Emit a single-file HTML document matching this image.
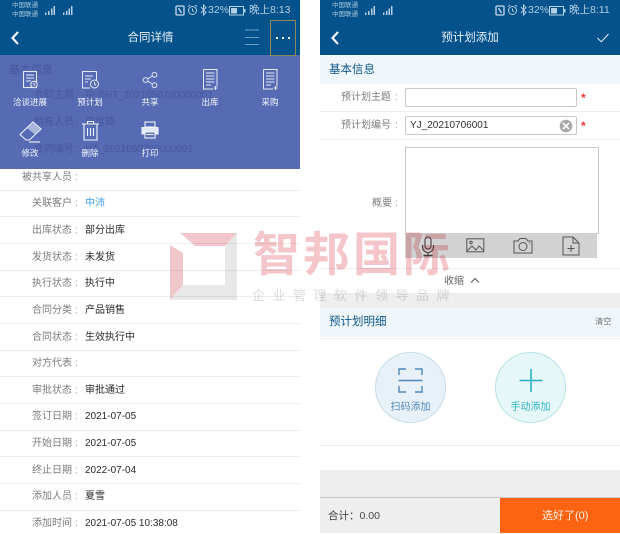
<!DOCTYPE html>
<html lang="zh">
<head>
<meta charset="utf-8">
<style>
html,body{margin:0;padding:0;background:#fff}
body{width:620px;height:533px;position:relative;overflow:hidden;font-family:"Liberation Sans","Noto Sans CJK SC",sans-serif;color:#333;filter:blur(.25px)}
.a{position:absolute;white-space:nowrap}
.hdr{position:absolute;top:0;height:55px;width:300px;background:#04528c}
.st{position:absolute;color:#b5cfe3;font-size:10.5px;line-height:12px}
.sm{position:absolute;color:#a9c6dc;font-size:6.5px;line-height:8px}
.ttl{position:absolute;top:30px;color:#e8f0f6;font-size:11.5px;line-height:16px;text-align:center}
.lb{position:absolute;left:0;width:72px;margin-top:1px;text-align:right;font-size:10px;line-height:14px;color:#7c7c7c;white-space:nowrap}
.co{position:absolute;left:75px;margin-top:1px;font-size:10px;line-height:14px;color:#999}
.v{position:absolute;left:85px;margin-top:1px;font-size:10px;line-height:14px;color:#2a2a2a;white-space:nowrap}
.ln{position:absolute;left:0;width:300px;height:1px;background:#eeeeee}
.rl{position:absolute;height:1px;left:320px;width:300px;background:#eeeeee}
.ml{position:absolute;color:#f4f6fc;font-size:8.5px;line-height:13px;text-align:center;white-space:nowrap;transform:translateX(-50%)}
.ghost{position:absolute;color:#47579d;font-size:10px;line-height:14px;white-space:nowrap}
.rlab{position:absolute;left:320px;width:71px;text-align:right;font-size:10px;line-height:14px;color:#7c7c7c;white-space:nowrap}
.star{position:absolute;left:581px;font-size:12px;line-height:12px;font-weight:bold;color:#f03838}
</style>
</head>
<body>

<!-- LEFT PANEL -->
<div class="a" style="left:0;top:169px;width:300px;height:364px;background:#fff"></div>
<div class="lb" style="top:170px">被共享人员</div><div class="co" style="top:170px">:</div>
<div class="ln" style="top:190px"></div>
<div class="lb" style="top:196px">关联客户</div><div class="co" style="top:196px">:</div><div class="v" style="top:196px;color:#3d9df2">中沛</div>
<div class="ln" style="top:216px"></div>
<div class="lb" style="top:223px">出库状态</div><div class="co" style="top:223px">:</div><div class="v" style="top:223px">部分出库</div>
<div class="ln" style="top:243px"></div>
<div class="lb" style="top:250px">发货状态</div><div class="co" style="top:250px">:</div><div class="v" style="top:250px">未发货</div>
<div class="ln" style="top:270px"></div>
<div class="lb" style="top:276px">执行状态</div><div class="co" style="top:276px">:</div><div class="v" style="top:276px">执行中</div>
<div class="ln" style="top:296px"></div>
<div class="lb" style="top:303px">合同分类</div><div class="co" style="top:303px">:</div><div class="v" style="top:303px">产品销售</div>
<div class="ln" style="top:323px"></div>
<div class="lb" style="top:330px">合同状态</div><div class="co" style="top:330px">:</div><div class="v" style="top:330px">生效执行中</div>
<div class="ln" style="top:350px"></div>
<div class="lb" style="top:356px">对方代表</div><div class="co" style="top:356px">:</div>
<div class="ln" style="top:376px"></div>
<div class="lb" style="top:383px">审批状态</div><div class="co" style="top:383px">:</div><div class="v" style="top:383px">审批通过</div>
<div class="ln" style="top:403px"></div>
<div class="lb" style="top:409px">签订日期</div><div class="co" style="top:409px">:</div><div class="v" style="top:409px">2021-07-05</div>
<div class="ln" style="top:430px"></div>
<div class="lb" style="top:436px">开始日期</div><div class="co" style="top:436px">:</div><div class="v" style="top:436px">2021-07-05</div>
<div class="ln" style="top:456px"></div>
<div class="lb" style="top:463px">终止日期</div><div class="co" style="top:463px">:</div><div class="v" style="top:463px">2022-07-04</div>
<div class="ln" style="top:483px"></div>
<div class="lb" style="top:489px">添加人员</div><div class="co" style="top:489px">:</div><div class="v" style="top:489px">夏雪</div>
<div class="ln" style="top:510px"></div>
<div class="lb" style="top:516px">添加时间</div><div class="co" style="top:516px">:</div><div class="v" style="top:516px">2021-07-05 10:38:08</div>

<!-- RIGHT PANEL BACKGROUNDS -->
<div class="a" style="left:320px;top:55px;width:300px;height:29px;background:#f0f7fb"></div>
<div class="a" style="left:329px;top:62px;font-size:11.5px;line-height:16px;color:#0f5688">基本信息</div>
<div class="rl" style="top:111px"></div>
<div class="rl" style="top:139px"></div>
<div class="rl" style="top:268px"></div>
<div class="a" style="left:320px;top:293px;width:300px;height:15px;background:#eeeeee"></div>
<div class="a" style="left:320px;top:308px;width:300px;height:29px;background:#f0f7fb"></div>
<div class="rl" style="top:338px"></div>
<div class="rl" style="top:445px"></div>
<div class="a" style="left:320px;top:470px;width:300px;height:63px;background:#eeeeee"></div>
<div class="a" style="left:320px;top:497px;width:300px;height:1px;background:#c9c9c9"></div>

<!-- RIGHT FORM -->
<div class="rlab" style="top:91px">预计划主题</div>
<div class="a" style="left:395px;top:91px;font-size:10px;line-height:14px;color:#999">:</div>
<div class="a" style="left:405px;top:88px;width:170px;height:17px;border:1px solid #c8c8c8;border-radius:2px;background:#fff"></div>
<div class="star" style="top:92px">*</div>

<div class="rlab" style="top:119px">预计划编号</div>
<div class="a" style="left:395px;top:119px;font-size:10px;line-height:14px;color:#999">:</div>
<div class="a" style="left:405px;top:116px;width:170px;height:17px;border:1px solid #c8c8c8;border-radius:2px;background:#fff"></div>
<div class="a" style="left:410px;top:119px;font-size:10px;line-height:14px;color:#333">YJ_20210706001</div>
<svg class="a" style="left:559px;top:119px" width="14" height="14" viewBox="0 0 14 14"><circle cx="7" cy="7" r="6.3" fill="#a8a8a8"/><path d="M4.4 4.4l5.2 5.2M9.6 4.4l-5.2 5.2" stroke="#fff" stroke-width="1.6" stroke-linecap="round"/></svg>
<div class="star" style="top:120px">*</div>

<div class="a" style="left:372px;top:197px;font-size:10px;line-height:14px;color:#7c7c7c">概要</div>
<div class="a" style="left:395px;top:197px;font-size:10px;line-height:14px;color:#999">:</div>
<div class="a" style="left:405px;top:147px;width:192px;height:85px;border:1px solid #c8c8c8;border-radius:1px;background:#fff"></div>
<div class="a" style="left:405px;top:233px;width:192px;height:25px;background:#d2d2d2"></div>

<div class="a" style="left:444px;top:275px;font-size:10px;line-height:14px;color:#666">收缩</div>
<svg class="a" style="left:469px;top:276px" width="12" height="9" viewBox="0 0 12 9"><path d="M2 6.500L6 2.500l4 4" fill="none" stroke="#555" stroke-width="1"/></svg>

<div class="a" style="left:329px;top:314px;font-size:11.500px;line-height:16px;color:#0f5688">预计划明细</div>
<div class="a" style="left:595px;top:316px;font-size:8.200px;line-height:12px;color:#777">清空</div>

<!-- circles -->
<div class="a" style="left:375px;top:352px;width:69px;height:69px;border:1px solid #c6dcea;border-radius:50%;background:#e9f1f8"></div>
<svg class="a" style="left:397px;top:367px" width="27" height="27" viewBox="0 0 27 27" fill="none" stroke="#4f88ba" stroke-width="1.400"><path d="M2 8V2h7M18 2h7v6M2 19v6h7M18 25h7v-6"/><path d="M1.500 13.500h24"/></svg>
<div class="a" style="left:375px;top:401px;width:71px;text-align:center;font-size:10px;line-height:14px;color:#4f88ba">扫码添加</div>

<div class="a" style="left:495px;top:352px;width:69px;height:69px;border:1px solid #b8e3e6;border-radius:50%;background:#e6f7f8"></div>
<svg class="a" style="left:518px;top:368px" width="26" height="26" viewBox="0 0 26 26" fill="none" stroke="#1fb0bf" stroke-width="1.500"><path d="M13 1v23M1.500 12.500h23"/></svg>
<div class="a" style="left:495px;top:401px;width:71px;text-align:center;font-size:10px;line-height:14px;color:#2fb3c0">手动添加</div>

<!-- footer -->
<div class="a" style="left:328px;top:509px;font-size:10.500px;line-height:14px;color:#444">合计：0.00</div>
<div class="a" style="left:500px;top:498px;width:120px;height:35px;background:#fd6411"></div>
<div class="a" style="left:542px;top:498px;color:#fdf0e6;font-size:11px;line-height:36px">选好了(0)</div>

<!-- WATERMARK -->
<svg class="a" style="left:170px;top:233px;mix-blend-mode:multiply" width="68" height="68" viewBox="0 0 68 68">
  <path d="M10 0H67L55 13H25Z" fill="#f2c6ca"/>
  <path d="M0 12L13 20V52L0 67Z" fill="#efc8cc"/>
  <path d="M55 13L67 0V67H0L13 52H55Z" fill="#e8e8e8"/>
</svg>
<div class="a" style="left:253px;top:228px;font-size:47px;line-height:54px;color:#f4c6ca;mix-blend-mode:multiply;letter-spacing:3px;font-weight:bold">智邦国际</div>
<div class="a" style="left:252px;top:288px;font-size:13px;line-height:16px;color:#dcdcdc;mix-blend-mode:multiply;letter-spacing:7.500px">企业管理软件领导品牌</div>

<!-- icons in toolbar (over watermark) -->
<svg class="a" style="left:420px;top:236px" width="16" height="22" viewBox="0 0 16 22" fill="none" stroke="#4a3a3a" stroke-width="1.100"><rect x="5" y="1" width="6" height="12" rx="3"/><path d="M2.500 9v2a5.500 5.500 0 0 0 11 0V9M8 16.500v2.500"/><path d="M3.500 19.500h9" stroke-width="1.600"/></svg>
<svg class="a" style="left:466px;top:238px" width="20" height="16" viewBox="0 0 20 16" fill="none" stroke="#555" stroke-width="1"><rect x=".8" y=".8" width="17" height="13"/><circle cx="5" cy="4.500" r="1.200"/><path d="M1 13l5-5 4 4 3-4 5 5"/></svg>
<svg class="a" style="left:513px;top:237px" width="20" height="17" viewBox="0 0 20 17" fill="none" stroke="#555" stroke-width="1"><path d="M1 4h4l2-2.500h6L15 4h4v12H1Z"/><circle cx="10" cy="9.500" r="4"/><path d="M16 6h1"/></svg>
<svg class="a" style="left:562px;top:236px" width="18" height="20" viewBox="0 0 18 20" fill="none" stroke="#555" stroke-width="1"><path d="M1 1h10l6 6v12H1Z"/><path d="M11 1v6h6"/><path d="M9 9v7M5.500 12.500h7"/></svg>

<!-- LEFT HEADER & OVERLAY -->
<div class="a" style="left:0;top:55px;width:300px;height:114px;background:#566bb3"></div>
<div class="ghost" style="left:9px;top:62px;font-size:11px;line-height:16px">基本信息</div>
<div class="ghost" style="left:34px;top:89px">合同主题</div>
<div class="ghost" style="left:75px;top:89px">:</div>
<div class="ghost" style="left:85px;top:89px">中沛HT_2021050700000001</div>
<div class="ghost" style="left:34px;top:116px">销售人员</div>
<div class="ghost" style="left:75px;top:116px">:</div>
<div class="ghost" style="left:85px;top:116px">高雪琦</div>
<div class="ghost" style="left:34px;top:143px">合同编号</div>
<div class="ghost" style="left:75px;top:143px">:</div>
<div class="ghost" style="left:85px;top:143px">HT_2021050700000001</div>

<div class="hdr" style="left:0"></div>
<div class="sm" style="left:12px;top:2px">中国联通</div>
<div class="sm" style="left:12px;top:11px">中国联通</div>
<svg class="a" style="left:40px;top:4px" width="34" height="11" viewBox="0 0 34 11" fill="#b5cfe3"><path d="M5 8.500h1.500V11H5zM8 7h1.500v4H8zM11 4.500h1.500V11H11zM13.500 2H15v9h-1.500zM23 8.500h1.500V11H23zM26 7h1.500v4H26zM28.500 4.500H30V11h-1.500zM31 2h1.500v9H31z"/></svg>
<svg class="a" style="left:175px;top:5px" width="10" height="11" viewBox="0 0 10 11" fill="none" stroke="#c5d9e8" stroke-width="1.300"><rect x="1" y="1" width="8" height="9" rx="1"/><path d="M3.500 3l3 5"/></svg>
<svg class="a" style="left:187px;top:4px" width="11" height="12" viewBox="0 0 11 12" fill="none" stroke="#b5cfe3"><circle cx="5.500" cy="6.500" r="4"/><path d="M5.500 4.500v2.200l1.500 1M1 2.500l2-1.500M10 2.500L8 1"/></svg>
<svg class="a" style="left:200px;top:4px" width="7" height="12" viewBox="0 0 7 12" fill="none" stroke="#b5cfe3"><path d="M1 3l5 5.500L3.500 11V1L6 3.500 1 9"/></svg>
<div class="st" style="left:208px;top:4px">32%</div>
<svg class="a" style="left:229px;top:6px" width="17" height="10" viewBox="0 0 17 10"><rect x=".5" y=".5" width="14" height="8.500" fill="none" stroke="#b5cfe3"/><rect x="2" y="2" width="6" height="5.500" fill="#b5cfe3"/><rect x="15" y="3" width="1.500" height="3.500" fill="#b5cfe3"/></svg>
<div class="st" style="left:249px;top:4px">晚上8:13</div>
<svg class="a" style="left:9px;top:29px" width="12" height="18" viewBox="0 0 12 18" fill="none" stroke="#f2f6fa" stroke-width="2.200"><path d="M9 3L3.500 9 9 15"/></svg>
<div class="ttl" style="left:100.500px;width:100px">合同详情</div>
<svg class="a" style="left:244px;top:28px" width="16" height="18" viewBox="0 0 16 18" stroke="#6f9dc0" stroke-width="1"><path d="M1 2h14M1 9.500h14M1 16.500h14"/></svg>
<div class="a" style="left:270px;top:20px;width:24px;height:34px;border:1px solid #8a8a52"></div>
<svg class="a" style="left:275px;top:35px" width="16" height="6" viewBox="0 0 16 6" fill="#f2f6fa"><rect x="1" y="2" width="2" height="2"/><rect x="7" y="2" width="2" height="2"/><rect x="13" y="2" width="2" height="2"/></svg>

<!-- menu icons -->
<svg class="a" style="left:22px;top:70px" width="17" height="20" viewBox="0 0 17 20" fill="none" stroke="#e3e8f5" stroke-width="1.100"><rect x="1.500" y="1.500" width="13" height="16"/><path d="M4 5h8M4 8h8M4 11h5"/><circle cx="12" cy="14.500" r="3.200" fill="#566bb3"/><path d="M12 13v1.800l1 .6"/></svg>
<svg class="a" style="left:81px;top:70px" width="19" height="20" viewBox="0 0 19 20" fill="none" stroke="#e3e8f5" stroke-width="1"><path d="M9 18H1.500V1.500h14V10"/><path d="M4 6h8M4 9h6M4 12h3"/><circle cx="13.500" cy="14" r="4"/><path d="M13.500 11.800v2.400l1.600 1"/></svg>
<svg class="a" style="left:142px;top:71px" width="17" height="18" viewBox="0 0 17 18" fill="none" stroke="#e3e8f5" stroke-width="1"><circle cx="12.500" cy="3.800" r="2.400"/><circle cx="3.500" cy="9" r="2.400"/><circle cx="12.500" cy="14.200" r="2.400"/><path d="M5.600 7.800l4.800-2.800M5.600 10.200l4.800 2.800"/></svg>
<svg class="a" style="left:202px;top:68px" width="17" height="23" viewBox="0 0 17 23" fill="none" stroke="#e3e8f5" stroke-width="1"><path d="M1.500 1.500h13.500v17M11 21H1.500V1.500"/><path d="M4 5h8.500M4 8h8.500M4 11h8.500M4 14h8.500M4 17h5"/><path d="M11.500 20h4M13.500 18v4"/></svg>
<svg class="a" style="left:262px;top:68px" width="17" height="23" viewBox="0 0 17 23" fill="none" stroke="#e3e8f5" stroke-width="1"><path d="M1.500 1.500h13.500v17M11 21H1.500V1.500"/><path d="M4 5h8.500M4 8h8.500M4 11h8.500M4 14h8.500M4 17h5"/><path d="M11.500 20h4M13.500 18v4"/></svg>
<svg class="a" style="left:18px;top:120px" width="25" height="23" viewBox="0 0 25 23" fill="none" stroke="#f0f3fa" stroke-width="1.100"><path d="M2 14.500L15 2l8 7-11.500 11H8Z"/><path d="M15.500 3l7 6-5.500 5.500-8-6.500Z" fill="#a9b6dc" stroke="none"/><path d="M11 22h11"/></svg>
<svg class="a" style="left:81px;top:120px" width="19" height="21" viewBox="0 0 19 21" fill="none" stroke="#f0f3fa" stroke-width="1.100"><path d="M1 4h17M6.500 4V1.500h6V4"/><path d="M3 4v16h13V4"/><path d="M6.500 8v8M9.500 8v8M12.500 8v8"/></svg>
<svg class="a" style="left:141px;top:121px" width="18" height="18" viewBox="0 0 18 18" fill="none" stroke="#f0f3fa" stroke-width="1.100"><rect x="4" y="1" width="10" height="5"/><path d="M1 6.500h16V13H1Z" fill="#e3e8f5"/><rect x="4" y="11" width="10" height="6" fill="#566bb3"/><path d="M5.500 13.500h7"/></svg>

<div class="ml" style="left:30px;top:96px">洽谈进展</div>
<div class="ml" style="left:90px;top:96px">预计划</div>
<div class="ml" style="left:150px;top:96px">共享</div>
<div class="ml" style="left:210px;top:96px">出库</div>
<div class="ml" style="left:270px;top:96px">采购</div>
<div class="ml" style="left:30px;top:147px">修改</div>
<div class="ml" style="left:90px;top:147px">删除</div>
<div class="ml" style="left:150px;top:147px">打印</div>

<!-- RIGHT HEADER -->
<div class="hdr" style="left:320px"></div>
<div class="sm" style="left:332px;top:2px">中国联通</div>
<div class="sm" style="left:332px;top:11px">中国联通</div>
<svg class="a" style="left:360px;top:4px" width="34" height="11" viewBox="0 0 34 11" fill="#b5cfe3"><path d="M5 8.500h1.500V11H5zM8 7h1.500v4H8zM11 4.500h1.500V11H11zM13.500 2H15v9h-1.500zM23 8.500h1.500V11H23zM26 7h1.500v4H26zM28.500 4.500H30V11h-1.500zM31 2h1.500v9H31z"/></svg>
<svg class="a" style="left:495px;top:5px" width="10" height="11" viewBox="0 0 10 11" fill="none" stroke="#c5d9e8" stroke-width="1.300"><rect x="1" y="1" width="8" height="9" rx="1"/><path d="M3.500 3l3 5"/></svg>
<svg class="a" style="left:507px;top:4px" width="11" height="12" viewBox="0 0 11 12" fill="none" stroke="#b5cfe3"><circle cx="5.500" cy="6.500" r="4"/><path d="M5.500 4.500v2.200l1.500 1M1 2.500l2-1.500M10 2.500L8 1"/></svg>
<svg class="a" style="left:520px;top:4px" width="7" height="12" viewBox="0 0 7 12" fill="none" stroke="#b5cfe3"><path d="M1 3l5 5.500L3.500 11V1L6 3.500 1 9"/></svg>
<div class="st" style="left:528px;top:4px">32%</div>
<svg class="a" style="left:549px;top:6px" width="17" height="10" viewBox="0 0 17 10"><rect x=".5" y=".5" width="14" height="8.500" fill="none" stroke="#b5cfe3"/><rect x="2" y="2" width="6" height="5.500" fill="#b5cfe3"/><rect x="15" y="3" width="1.500" height="3.500" fill="#b5cfe3"/></svg>
<div class="st" style="left:569px;top:4px">晚上8:11</div>
<svg class="a" style="left:329px;top:29px" width="12" height="18" viewBox="0 0 12 18" fill="none" stroke="#f2f6fa" stroke-width="2.200"><path d="M9 3L3.500 9 9 15"/></svg>
<div class="ttl" style="left:420px;width:100px">预计划添加</div>
<svg class="a" style="left:596px;top:32px" width="14" height="12" viewBox="0 0 14 12" fill="none" stroke="#e8f0f6" stroke-width="1"><path d="M1.500 6l3.800 3.800L12.500 2"/></svg>

</body>
</html>
